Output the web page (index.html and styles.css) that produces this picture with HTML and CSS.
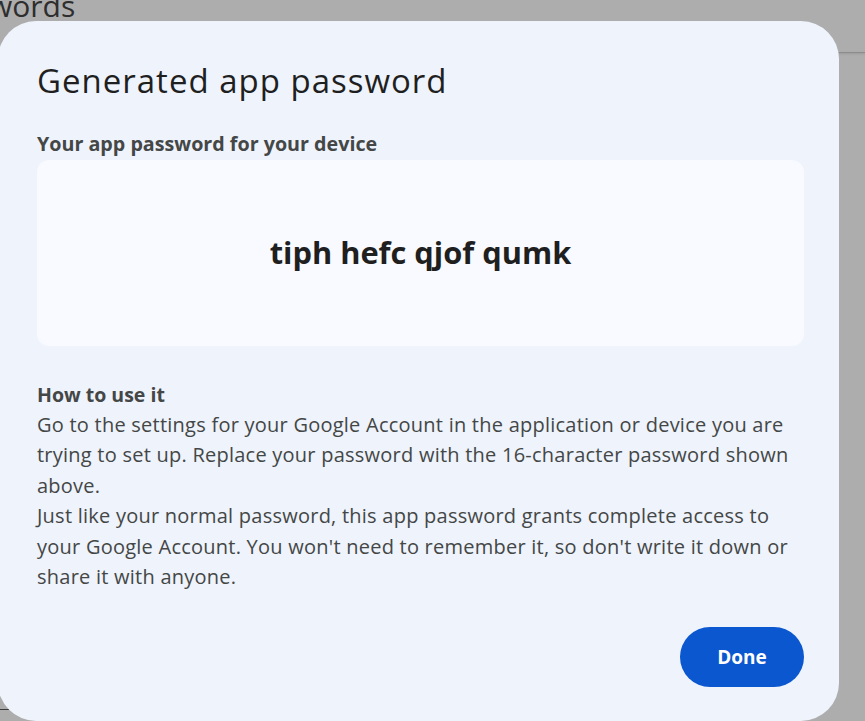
FILE: index.html
```html
<!DOCTYPE html>
<html lang="en">
<head>
<meta charset="utf-8">
<title>Generated app password</title>
<link rel="stylesheet" href="styles.css">
</head>
<body>
<div class="backdrop">
  <div class="page-title">words</div>
  <div class="rule rule-right"></div>
  <div class="rule rule-left"></div>
</div>
<div class="dialog" role="dialog">
  <h1 class="title">Generated app password</h1>
  <h2 class="label">Your app password for your device</h2>
  <div class="pw-box"><span class="pw">tiph hefc qjof qumk</span></div>
  <div class="howto">
    <h3 class="howto-title">How to use it</h3>
    <p class="body">Go to the settings for your Google Account in the application or device you are<br>trying to set up. Replace your password with the 16-character password shown<br>above.</p>
    <p class="body">Just like your normal password, this app password grants complete access to<br>your Google Account. You won't need to remember it, so don't write it down or<br>share it with anyone.</p>
  </div>
  <div class="actions"><button class="done">Done</button></div>
</div>
</body>
</html>
```
FILE: styles.css
```css
html, body {
  margin: 0;
  padding: 0;
  height: 100%;
}
body {
  background: #adadad;
  font-family: "Open Sans", "Liberation Sans", sans-serif;
  overflow: hidden;
  position: relative;
}
.backdrop {
  position: absolute;
  inset: 0;
}
.page-title {
  position: absolute;
  left: -11px;
  top: -14px;
  font-family: "Open Sans", sans-serif;
  font-size: 30px;
  line-height: 40px;
  color: #2e2e2e;
}
.rule {
  position: absolute;
  height: 1px;
}
.rule-right {
  left: 820px;
  right: 0;
  top: 52px;
  background: #8c8c8c;
  box-shadow: 0 1px 2px rgba(0,0,0,0.15);
}
.rule-left {
  left: 0;
  width: 40px;
  top: 709px;
  background: #3a3a3a;
}
.dialog {
  position: absolute;
  left: -2px;
  top: 21px;
  width: 841px;
  height: 700px;
  box-sizing: border-box;
  background: #eef3fc;
  border-radius: 38px;
  padding: 37px 35px 0 39px;
  display: flex;
  flex-direction: column;
}
.title {
  margin: 0;
  font-family: "Open Sans", sans-serif;
  font-weight: 400;
  font-size: 33px;
  line-height: 46px;
  color: #1f1f1f;
  letter-spacing: 1px;
}
.label {
  margin: 27px 0 0;
  font-size: 19.7px;
  font-weight: 700;
  line-height: 26px;
  color: #444746;
}
.pw-box {
  margin-top: 3px;
  height: 186px;
  background: #f8faff;
  border-radius: 12px;
  display: flex;
  align-items: center;
  justify-content: center;
}
.pw {
  font-size: 30.8px;
  font-weight: 700;
  color: #1f1f1f;
  line-height: 40px;
  margin-top: -3px;
}
.howto {
  margin-top: 34px;
}
.howto-title {
  margin: 0;
  font-size: 19.5px;
  font-weight: 700;
  line-height: 30px;
  color: #444746;
}
.body {
  margin: 0;
  font-size: 20px;
  line-height: 30.4px;
  letter-spacing: 0.24px;
  color: #444746;
}
.actions {
  margin-top: auto;
  margin-bottom: 34px;
  display: flex;
  justify-content: flex-end;
}
.done {
  width: 124px;
  height: 60px;
  border: none;
  border-radius: 30px;
  background: #0b57d0;
  color: #ffffff;
  font-family: "Open Sans", "Liberation Sans", sans-serif;
  font-size: 19px;
  font-weight: 700;
  cursor: pointer;
}
```
